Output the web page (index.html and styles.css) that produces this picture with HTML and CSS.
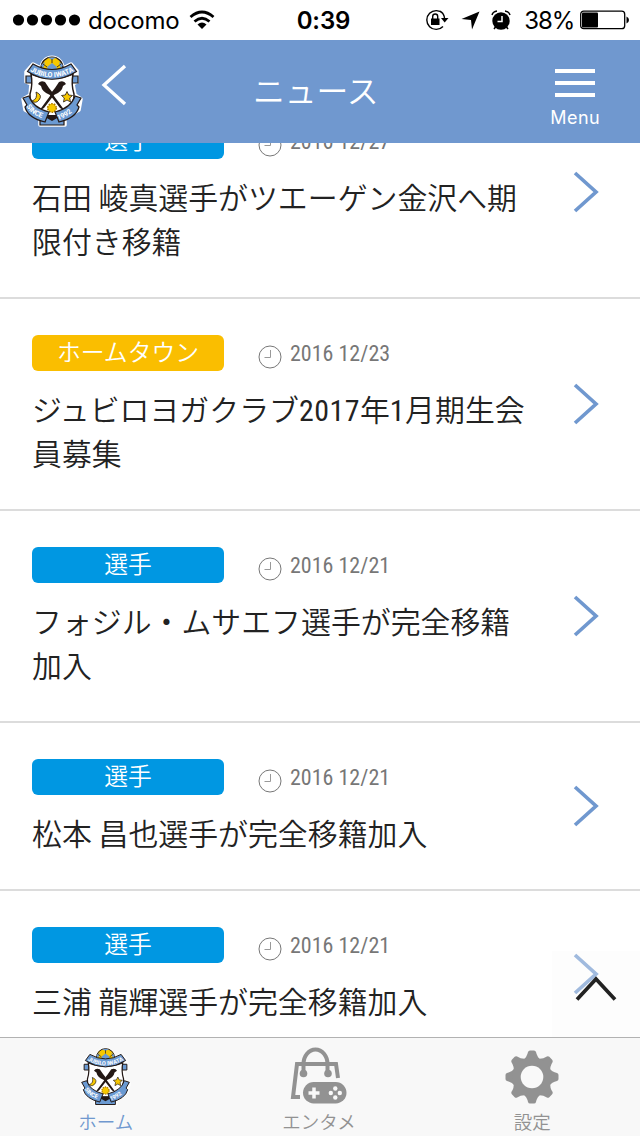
FILE: index.html
```html
<!DOCTYPE html>
<html lang="ja">

<head>
  <title>ニュース</title>
  <meta charset="UTF-8">
  <meta name="viewport" content="width=device-width, initial-scale=1.0">
  <link rel="stylesheet" href="styles.css">
</head>

<body>

<!-- shared icons -->
<svg class="defs" width="0" height="0">
  <symbol id="crest" viewBox="0 0 62 73">
    <g fill="#fff" stroke="#fff" stroke-width="3.5" stroke-linejoin="round">
      <circle cx="31" cy="13" r="10.8"/>
      <path d="M12 9 Q31 20 50 9 L56 16 V27 L52 29 L54 40 L60 44 L58 55 L44 63 V70 H19 V63 L4 55 L2 44 L9 40 L10 29 L5 27 V17Z"/>
    </g>
    <circle cx="31" cy="13" r="11" fill="#f7c800" stroke="#231815" stroke-width="1.2"/>
    <path d="M31 8 L36 12 L34 18 H28 L26 12Z M27 2.5 H35 L31 5Z M20 10 L24 7 L22 14Z M42 10 L38 7 L40 14Z" fill="#6b9ad2"/>
    <path d="M31 8 V4 M36 12 L40 9 M26 12 L22 9" stroke="#231815" stroke-width=".8"/>
    <path d="M5 21 H11 V28 H5Z M51 21 H57 V28 H51Z" fill="#6b9ad2" stroke="#231815" stroke-width="1.2"/>
    <path d="M10 19 Q31 28 52 19 Q50 30 53 39 Q54 54 31 63 Q8 54 9 39 Q12 30 10 19Z" fill="#fff" stroke="#231815" stroke-width="1.5"/>
    <!-- birds -->
    <path d="M17 29 Q19 25 24 27 L28 33 Q31 36 33 41 L44 56 L39 53 L29 40 Q21 37 20 31Z" fill="#231815"/>
    <path d="M45 29 Q43 25 38 27 L34 33 Q31 36 29 41 L18 56 L23 53 L33 40 Q41 37 42 31Z" fill="#231815"/>
    <path d="M15 37 Q22 40 18 45 Q15 49 11 46 Q17 44 15 37Z" fill="#f7c800" stroke="#231815" stroke-width=".8"/>
    <path d="M46 36.5 L47.7 40 L51.5 40.5 L48.7 43 L49.5 47 L46 45 L42.5 47 L43.3 43 L40.5 40.5 L44.3 40Z" fill="#f7c800" stroke="#231815" stroke-width=".8"/>
    <circle cx="31" cy="53" r="4.3" fill="#f7c800" stroke="#b07e00" stroke-width="1.6" stroke-dasharray="1.6 1.1"/>
    <!-- ribbons -->
    <path d="M12 9 Q31 20 50 9 L55.500 16.500 Q31 32 6.500 16.500Z" fill="#6b9ad2" stroke="#231815" stroke-width="1.2"/>
    <path d="M19 61 H43 V70 H19Z" fill="#6b9ad2" stroke="#231815" stroke-width="1.2"/>
    <path d="M24 62 L31 66 L38 62 V60 H24Z" fill="#231815"/>
    <path d="M2 43 L8 41 Q12 53 28 57 L24 67 Q7 63 4 52 L6 50Z" fill="#6b9ad2" stroke="#231815" stroke-width="1.2"/>
    <path d="M60 43 L54 41 Q50 53 34 57 L38 67 Q55 63 58 52 L56 50Z" fill="#6b9ad2" stroke="#231815" stroke-width="1.2"/>
    <path id="arcTop" d="M9 16 Q31 29 55 15" fill="none"/>
    <path id="arcLeft" d="M5.500 51 Q10 61 28 65" fill="none"/>
    <path id="arcRight" d="M37 65 Q51 61 58 48" fill="none"/>
    <g class="crest-text">
      <text><textPath href="#arcTop">JUBILO IWATA</textPath></text>
      <text><textPath href="#arcLeft">SINCE</textPath></text>
      <text><textPath href="#arcRight">1992</textPath></text>
    </g>
  </symbol>
  <symbol id="clock" viewBox="0 0 24 24">
    <g fill="none" stroke="#777">
      <circle cx="12" cy="12" r="11"/>
      <path d="M12.500 5 V12.500 H6.500" stroke="#999"/>
    </g>
  </symbol>
  <symbol id="next" viewBox="0 0 26 42">
    <path d="M2 2 L23 21 L2 40" fill="none" stroke="#7098cf" stroke-width="3.7"/>
  </symbol>
</svg>

<div class="phone">
  <div class="status">
    <div class="carrier">
      <svg width="68" height="12" viewBox="0 0 68 12">
        <circle cx="5.500" cy="6" r="5.600"/><circle cx="19.500" cy="6" r="5.600"/><circle cx="33.500" cy="6" r="5.600"/><circle cx="47.500" cy="6" r="5.600"/><circle cx="61.500" cy="6" r="5.600"/>
      </svg>
      <span class="carrier-name">docomo</span>
      <svg width="26" height="20" viewBox="0 0 26 20">
        <g fill="none" stroke="#000" stroke-width="2.800">
          <path d="M1.500 7 Q13 -3 24.500 7"/>
          <path d="M5.500 11.500 Q13 5 20.500 11.500"/>
        </g>
        <path d="M8.500 14.500 Q13 10.500 17.500 14.500 L13 19Z"/>
      </svg>
    </div>
    <div class="time">0:39</div>
    <div class="indicators">
      <svg width="24" height="22" viewBox="0 0 24 22">
        <path d="M18 4.500 A9.400 9.400 0 1 0 18 17.500 M15 2.200 A9.400 9.400 0 0 1 19.600 10" fill="none" stroke="#000" stroke-width="1.400"/>
        <path d="M16 9 H23.500 L19.700 13.500Z"/>
        <path d="M6 9.500 H14.500 V16 H6Z"/>
        <path d="M7.700 10 V7.500 A2.500 2.500 0 0 1 12.700 7.500 V10" fill="none" stroke="#000" stroke-width="1.400"/>
      </svg>
      <svg class="location" width="19" height="19" viewBox="0 0 19 19">
        <path d="M18.500 .5 L11 18.500 L10 9 L.5 8Z"/>
      </svg>
      <svg class="alarm" width="20" height="20" viewBox="0 0 20 20">
        <circle cx="10" cy="11" r="8.700"/>
        <path d="M1 5 Q2 1.500 6 1 M19 5 Q18 1.500 14 1 M4.500 17 L3 19 M15.500 17 L17 19" fill="none" stroke="#000" stroke-width="1.500"/>
        <path d="M11 6 V11.500 H6.500" fill="none" stroke="#fff" stroke-width="1.500"/>
      </svg>
      <span class="percent">38%</span>
      <svg width="50" height="20" viewBox="0 0 50 20">
        <rect x=".7" y="1.200" width="44" height="17.500" rx="3" fill="#fff" stroke="#000" stroke-width="1.300"/>
        <rect x="2" y="2.500" width="16" height="15" rx="1"/>
        <path d="M46.500 6.500 Q49 7.500 49 10 Q49 12.500 46.500 13.500Z"/>
      </svg>
    </div>
  </div>

  <header class="header">
    <svg class="logo" width="62" height="73"><use href="#crest"/></svg>
    <svg class="back" width="26" height="42" viewBox="0 0 26 42">
      <path d="M24 2 L3 21 L24 40" fill="none" stroke="#fff" stroke-width="3.300"/>
    </svg>
    <h1 class="title">ニュース</h1>
    <div class="menu">
      <div class="bars"><i></i><i></i><i></i></div>
      <span>Menu</span>
    </div>
  </header>

  <main class="news">
    <article class="item">
      <div class="body">
        <div class="meta">
          <span class="tag">選手</span>
          <svg width="24" height="24"><use href="#clock"/></svg>
          <time>2016 12/27</time>
        </div>
        <p class="text">石田 崚真選手がツエーゲン金沢へ期<br>限付き移籍</p>
      </div>
      <svg class="next" width="26" height="42"><use href="#next"/></svg>
    </article>
    <article class="item">
      <div class="body">
        <div class="meta">
          <span class="tag hometown">ホームタウン</span>
          <svg width="24" height="24"><use href="#clock"/></svg>
          <time>2016 12/23</time>
        </div>
        <p class="text">ジュビロヨガクラブ<b>2017</b>年<b>1</b>月期生会<br>員募集</p>
      </div>
      <svg class="next" width="26" height="42"><use href="#next"/></svg>
    </article>
    <article class="item">
      <div class="body">
        <div class="meta">
          <span class="tag">選手</span>
          <svg width="24" height="24"><use href="#clock"/></svg>
          <time>2016 12/21</time>
        </div>
        <p class="text">フォジル・ムサエフ選手が完全移籍<br>加入</p>
      </div>
      <svg class="next" width="26" height="42"><use href="#next"/></svg>
    </article>
    <article class="item">
      <div class="body">
        <div class="meta">
          <span class="tag">選手</span>
          <svg width="24" height="24"><use href="#clock"/></svg>
          <time>2016 12/21</time>
        </div>
        <p class="text">松本 昌也選手が完全移籍加入</p>
      </div>
      <svg class="next" width="26" height="42"><use href="#next"/></svg>
    </article>
    <article class="item">
      <div class="body">
        <div class="meta">
          <span class="tag">選手</span>
          <svg width="24" height="24"><use href="#clock"/></svg>
          <time>2016 12/21</time>
        </div>
        <p class="text">三浦 龍輝選手が完全移籍加入</p>
      </div>
      <svg class="next" width="26" height="42"><use href="#next"/></svg>
    </article>
    <div class="page-top">
      <svg width="42" height="26" viewBox="0 0 42 26">
        <path d="M2 23.500 L21 3 L40 23.500" fill="none" stroke="#222" stroke-width="3.700"/>
      </svg>
    </div>
  </main>

  <nav class="tabs">
    <div class="tab active">
      <svg width="51" height="60"><use href="#crest"/></svg>
      <span>ホーム</span>
    </div>
    <div class="tab">
      <svg class="bag" width="58" height="58" viewBox="0 0 58 58">
        <g fill="none" stroke="#929292" stroke-width="4">
          <path d="M10 50 H3 L7 17 H46 L48 31"/>
          <path d="M13.500 27 V17 A12 14.500 0 0 1 37.500 17 V27"/>
        </g>
        <g fill="#929292">
          <circle cx="13.500" cy="26.500" r="3.800"/><circle cx="38" cy="26.500" r="3.800"/>
          <rect x="13" y="35" width="43.500" height="21.500" rx="10.700"/>
        </g>
        <path d="M18.500 46 H29.500 M24 40.500 V51.500" stroke="#f8f8f8" stroke-width="3.500"/>
        <g fill="#f8f8f8">
          <circle cx="45.300" cy="41.500" r="2.200"/><circle cx="45.300" cy="50.500" r="2.200"/><circle cx="40.800" cy="46" r="2.200"/><circle cx="49.800" cy="46" r="2.200"/>
        </g>
      </svg>
      <span>エンタメ</span>
    </div>
    <div class="tab">
      <svg class="gear" width="54" height="54" viewBox="-27 -27 54 54">
        <g fill="#929292">
          <path id="teeth" d="M-9 -17 Q-5 -20 -4 -25 Q-3.500 -26.500 -2 -26.500 H2 Q3.500 -26.500 4 -25 Q5 -20 9 -17 V17 Q5 20 4 25 Q3.500 26.500 2 26.500 H-2 Q-3.500 26.500 -4 25 Q-5 20 -9 17Z"/>
          <use href="#teeth" transform="rotate(45)"/>
          <use href="#teeth" transform="rotate(90)"/>
          <use href="#teeth" transform="rotate(135)"/>
          <circle r="19.500"/>
        </g>
        <circle r="11.300" fill="#f9f9f9"/>
      </svg>
      <span>設定</span>
    </div>
  </nav>
</div>

</body>

</html>
```
FILE: styles.css
```css
body {
  margin: 0;
  background: #fff;
  font-family: "Roboto Condensed", Roboto, "Noto Sans CJK JP", sans-serif;
  font-weight: 350;
  color: #222;
}

.defs {
  position: absolute;
}

.phone {
  display: flex;
  flex-direction: column;
  width: 640px;
  height: 1136px;
  overflow: hidden;
}

.status {
  display: grid;
  grid-template-columns: 1fr auto 1fr;
  align-items: center;
  height: 40px;
  padding: 0 10px 0 13px;
  font-family: Inter, sans-serif;
  font-size: 24px;
  font-weight: 400;
  color: #000;
}

.carrier,
.indicators {
  display: flex;
  align-items: center;
}

.carrier-name {
  margin: 0 10px 0 7px;
  letter-spacing: -.2px;
}

.time {
  padding-left: 4px;
  font-weight: 600;
  letter-spacing: -.1px;
}

.indicators {
  justify-content: flex-end;
}

.location {
  margin: 0 11px 0 12px;
}

.percent {
  margin: 0 6px 0 13px;
  letter-spacing: -1.200px;
}

.header {
  display: flex;
  align-items: center;
  flex: none;
  box-sizing: border-box;
  height: 103px;
  padding: 0 40px 0 21px;
  background: #7098cf;
  color: #fff;
}

.back {
  margin: -14px 0 0 18px;
}

.title {
  flex: 1;
  margin: 0 0 0 126px;
  font-size: 31.800px;
  font-weight: 350;
  line-height: 44px;
}

.menu {
  display: flex;
  flex-direction: column;
  align-items: center;
  padding-top: 15px;
  font-family: Inter, sans-serif;
  font-size: 18px;
  font-weight: 400;
  line-height: 22px;
  letter-spacing: .4px;
}

.bars {
  display: grid;
  gap: 8px;
  margin-bottom: 10px;
}

.bars i {
  width: 40px;
  height: 4px;
  background: #fff;
}

.news {
  position: relative;
  flex: 1;
  min-height: 0;
  overflow: hidden;
}

.item {
  display: flex;
  align-items: center;
  justify-content: space-between;
  padding: 36px 41px 32px 32px;
  border-bottom: 2px solid #dcdcdc;
}

/* list is scrolled under the header */
.item:first-child {
  margin-top: -56px;
}

.meta {
  display: flex;
  height: 36px;
  margin-bottom: 18px;
}

.meta svg {
  margin: 10px 8px 0 34px;
}

.next {
  margin-bottom: 5px;
}

.tag {
  width: 192px;
  border-radius: 6px;
  background: #0097e2;
  color: #fff;
  font-size: 23.800px;
  line-height: 36px;
  text-align: center;
}

.hometown {
  background: #fabe00;
}

time {
  font-size: 22px;
  font-weight: 370;
  font-stretch: 75%;
  line-height: 38px;
  color: #777;
}

.text {
  margin: 0;
  font-size: 29.900px;
  font-stretch: 75%;
  line-height: 44px;
  white-space: nowrap;
}

.text b {
  font-weight: 400;
  letter-spacing: .5px;
}

.page-top {
  position: absolute;
  right: 0;
  bottom: 0;
  display: flex;
  justify-content: center;
  box-sizing: border-box;
  width: 88px;
  height: 86px;
  padding-top: 25px;
  background: rgba(250, 250, 250, .35);
}

.tabs {
  display: grid;
  grid-template-columns: repeat(3, 1fr);
  box-sizing: border-box;
  height: 99px;
  border-top: 1px solid #b2b2b2;
  background: #f8f8f8;
}

.tab {
  display: flex;
  flex-direction: column;
  align-items: center;
  justify-content: space-between;
  padding: 9px 2px 0 0;
  font-size: 18.500px;
  line-height: 26px;
  color: #929292;
}

.active {
  color: #7098cf;
}

.gear {
  margin-top: 3px;
}

.crest-text {
  fill: #fff;
  font-family: Roboto, sans-serif;
  font-size: 7px;
  font-weight: 700;
}
```
